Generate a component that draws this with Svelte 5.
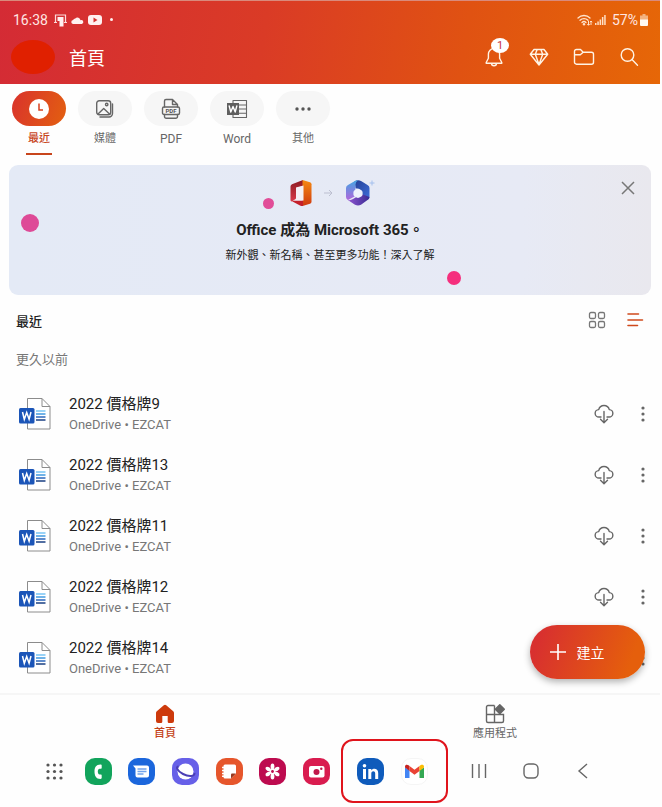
<script lang="ts">
	let activeTab = $state('recent');

	const tabs = [
		{ id: 'recent', label: '最近' },
		{ id: 'media', label: '媒體' },
		{ id: 'pdf', label: 'PDF' },
		{ id: 'word', label: 'Word' },
		{ id: 'more', label: '其他' }
	];

	const files = [
		{ name: '2022 價格牌9', place: 'OneDrive • EZCAT' },
		{ name: '2022 價格牌13', place: 'OneDrive • EZCAT' },
		{ name: '2022 價格牌11', place: 'OneDrive • EZCAT' },
		{ name: '2022 價格牌12', place: 'OneDrive • EZCAT' },
		{ name: '2022 價格牌14', place: 'OneDrive • EZCAT' }
	];
</script>

<div class="screen">
	<header>
		<div class="status">
			<span class="time">16:38</span>
			<svg width="13" height="14" viewBox="0 0 13 14" aria-hidden="true">
				<path d="M1.500 9V2h10v7" fill="none" stroke="#fbdcdc" stroke-width="1.2" />
				<path d="M0 9.500h3M10 9.500h3" stroke="#fbdcdc" stroke-width="1.2" />
				<path d="M3.500 4h6v9.500h-4V8h-2z" fill="#fff0f0" />
			</svg>
			<svg width="13" height="14" viewBox="0 0 13 14" aria-hidden="true">
				<path
					d="M2.500 11a2 2 0 0 1-.4-4 2.500 2.500 0 0 1 2.200-1.500 3 3 0 0 1 5.200 1.700A2 2 0 0 1 11 11z"
					fill="#fff0f0"
				/>
			</svg>
			<svg width="14" height="14" viewBox="0 0 14 14" aria-hidden="true">
				<rect y="2" width="14" height="10" rx="3" fill="#fff0f0" />
				<path d="M5.500 4.600 9.500 7l-4 2.400z" fill="#d5322f" />
			</svg>
			<span class="dot"></span>
			<span class="signal">
				<svg width="16" height="14" viewBox="0 0 16 14" aria-hidden="true">
					<g fill="none" stroke="#ffe3cc" stroke-width="1.300" stroke-linecap="round">
						<path d="M1 5a8.500 8.500 0 0 1 12 0M3 7.300a5.700 5.700 0 0 1 8 0M5 9.500a2.900 2.900 0 0 1 4 0" />
					</g>
					<circle cx="7" cy="11.300" r="1.200" fill="#ffe3cc" />
					<path d="M11.500 8v4M10.300 11l1.200 1.300 1.200-1.300M14 12V8M12.900 9.200 14 8l1.200 1.200" fill="none" stroke="#ffe3cc" />
				</svg>
				<svg width="11" height="14" viewBox="0 0 11 14" aria-hidden="true">
					<path d="M0 10h1.500v2H0zM2.300 8.500h1.500V12H2.300zM4.600 6.500h1.500V12H4.600zM6.900 4h1.500v8H6.900zM9.200 2h1.500v10H9.200z" fill="#ffdfc4" />
				</svg>
				<span class="percent">57%</span>
				<svg width="8" height="14" viewBox="0 0 8 14" aria-hidden="true">
					<path d="M2.500 1h3v1.500H8V7H0V2.500h2.500z" fill="#f3b27f" />
					<path d="M0 6.500h8V12a1 1 0 0 1-1 1H1a1 1 0 0 1-1-1z" fill="#fff8f0" />
				</svg>
			</span>
		</div>

		<div class="appbar">
			<span class="avatar"></span>
			<h1>首頁</h1>
			<div class="actions">
				<button aria-label="通知" class="bell">
					<svg width="22" height="22" viewBox="0 0 22 22">
						<path
							d="M11 2.500a5.600 5.600 0 0 0-5.600 5.600v4.200L3.200 16.500v.8h15.600v-.8l-2.200-4.200V8.100A5.600 5.600 0 0 0 11 2.500zM8.500 17.300a2.500 2.500 0 0 0 5 0"
						/>
					</svg>
					<span class="badge">1</span>
				</button>
				<button aria-label="進階">
					<svg width="22" height="22" viewBox="0 0 22 22">
						<path d="M6 3.500h10l3.700 4.700L11 19 2.300 8.200zM2.300 8.200h17.400M7.300 8.200 11 18.500l3.700-10.300M7.300 8.200 9.200 3.500M14.700 8.200l-1.900-4.700" />
					</svg>
				</button>
				<button aria-label="檔案">
					<svg width="22" height="22" viewBox="0 0 22 22">
						<path
							d="M1.500 5.500a2 2 0 0 1 2-2h4l2.700 2.700h8.300a2 2 0 0 1 2 2v8a2 2 0 0 1-2 2h-15a2 2 0 0 1-2-2zM1.500 8.700h5.800l2.900-2.500"
						/>
					</svg>
				</button>
				<button aria-label="搜尋">
					<svg width="22" height="22" viewBox="0 0 22 22">
						<circle cx="9.500" cy="9" r="6.300" />
						<path d="m14 13.500 5.500 5.700" />
					</svg>
				</button>
			</div>
		</div>
	</header>

	<nav class="tabs" aria-label="檔案類型">
		{#each tabs as tab (tab.id)}
			<button class:active={activeTab === tab.id} onclick={() => (activeTab = tab.id)}>
				<span class="pill">
					{#if tab.id === 'recent'}
						<svg width="22" height="22" viewBox="0 0 22 22">
							<circle cx="11" cy="11" r="10" fill="#fff" />
							<path d="M11 5.500V12h4" fill="none" stroke="#d6401f" stroke-width="1.500" />
						</svg>
					{:else if tab.id === 'media'}
						<svg width="20" height="20" viewBox="0 0 20 20" class="line">
							<rect x="1.700" y="1.700" width="14" height="14" rx="2.500" />
							<path d="m3 15 5.700-5.500L14.500 15M17.500 5v9.500a3.500 3.500 0 0 1-3.500 3.500H5" />
							<circle cx="11.700" cy="5.500" r="1.200" />
						</svg>
					{:else if tab.id === 'pdf'}
						<svg width="20" height="22" viewBox="0 0 20 22" class="line">
							<path d="M3.500 9V3a1.500 1.500 0 0 1 1.500-1.500h6.500l5 5V9M11.500 1.500v5h5" />
							<rect x="1.500" y="9" width="17" height="7.500" rx="1.500" />
							<path d="M3.500 16.500v2A1.700 1.700 0 0 0 5.200 20.200h9.600a1.700 1.700 0 0 0 1.700-1.700v-2" />
							<text x="10" y="15" text-anchor="middle">PDF</text>
						</svg>
					{:else if tab.id === 'word'}
						<svg width="22" height="22" viewBox="0 0 22 22" class="line">
							<path d="M7 5V2.500h13.500v17H7V16M12 7h8.500M12 11h8.500M12 15.300h8.500" stroke-width="1.100" />
							<rect x="1" y="5" width="12" height="12" class="block" />
							<path d="m3.200 8 1.600 6L7 8.500 9.200 14l1.600-6" class="letter" />
						</svg>
					{:else}
						<svg width="22" height="22" viewBox="0 0 22 22" fill="#555">
							<circle cx="5" cy="11" r="1.700" />
							<circle cx="11" cy="11" r="1.700" />
							<circle cx="17" cy="11" r="1.700" />
						</svg>
					{/if}
				</span>
				<span class="label" class:latin={/^\w+$/.test(tab.label)}>{tab.label}</span>
			</button>
		{/each}
	</nav>

	<section class="banner">
		<span class="bubble left"></span>
		<span class="bubble middle"></span>
		<span class="bubble right"></span>
		<button class="close" aria-label="關閉">
			<svg width="16" height="16" viewBox="0 0 16 16">
				<path d="m2 2 12 12M14 2 2 14" stroke="#777" stroke-width="1.500" />
			</svg>
		</button>
		<div class="logos">
			<svg width="22" height="28" viewBox="0 0 22 28" aria-hidden="true">
				<defs>
					<linearGradient id="office-left" x1="0" y1="0" x2="0" y2="1">
						<stop offset="0" stop-color="#8d1b23" />
						<stop offset="1" stop-color="#d93a4a" />
					</linearGradient>
					<linearGradient id="office-right" x1="0" y1="0" x2="0" y2="1">
						<stop offset="0" stop-color="#f58a12" />
						<stop offset="1" stop-color="#cf3a10" />
					</linearGradient>
				</defs>
				<path d="M.5 7.500q0-1.500 1.500-2.200L13 1v6L6 9v10.500q0 1-1 1.500l-3.500 1.500q-1-.5-1-1.500z" fill="url(#office-left)" />
				<path d="M12.500 1 20 3.300q1.500.5 1.500 2v17.400q0 1.500-1.500 2L12.500 27z" fill="url(#office-right)" />
				<path d="M2 21.500h11V27q-1.500.3-3-.5l-7.500-4z" fill="#c4202b" />
				<path d="M6 8.500 13.500 6.500v15H2.500L5 20.500q1-.5 1-1.500z" fill="#f4f0f5" />
			</svg>
			<svg width="9" height="8" viewBox="0 0 9 8" aria-hidden="true">
				<path d="M0 4h8M5 1l3 3-3 3" fill="none" stroke="#bcbfd0" />
			</svg>
			<svg width="30" height="28" viewBox="0 0 30 28" aria-hidden="true">
				<defs>
					<linearGradient id="m365-left" x1="0" y1="0" x2="0" y2="1">
						<stop offset="0" stop-color="#43a5e2" />
						<stop offset="1" stop-color="#b067dc" />
					</linearGradient>
					<linearGradient id="m365-right" x1="0" y1="0" x2="1" y2="1">
						<stop offset="0" stop-color="#243f94" />
						<stop offset="1" stop-color="#3e70dc" />
					</linearGradient>
					<linearGradient id="m365-base" x1="0" y1="0" x2="1" y2="0">
						<stop offset="0" stop-color="#9256d2" />
						<stop offset="1" stop-color="#382c93" />
					</linearGradient>
				</defs>
				<path d="M9.500 2.200q3.500-1.800 7 0L22.500 6q2 1 2 3v9q0 2-2 3l-6-4V12l-6-3z" fill="url(#m365-right)" />
				<path d="M9.500 2.200q2-1 3.500-1-2.500 1.500-2.500 4.500V17L3 21q-2-1-2-3V9q0-2 2-3z" fill="url(#m365-left)" />
				<path d="M2.500 20.800q3 1 5.500-.8l8.500-5 8 3q0 2-2 3L16 25.800q-3 1.500-6 0z" fill="url(#m365-base)" />
				<path d="M11.200 10q1.600-.8 3.200 0l2 1.200q1.200.8 1.200 2v2.200q0 1.200-1.200 2l-2 1.200q-1.400.8-2.800 0l-2-1.200q-1.200-.8-1.200-2v-2.200q0-1.200 1.200-2z" fill="#edf1fc" />
				<path d="M27 1.500v5M24.500 4h5" stroke="#a4c0ee" />
			</svg>
		</div>
		<h2>Office 成為 Microsoft 365。</h2>
		<p>新外觀、新名稱、甚至更多功能！深入了解</p>
	</section>

	<main>
		<div class="list-head">
			<h3>最近</h3>
			<button aria-label="格狀檢視">
				<svg width="18" height="18" viewBox="0 0 18 18" fill="none" stroke="#777" stroke-width="1.300">
					<rect x="1.500" y="1.500" width="6" height="6" rx="1.500" />
					<rect x="10.500" y="1.500" width="6" height="6" rx="1.500" />
					<rect x="1.500" y="10.500" width="6" height="6" rx="1.500" />
					<rect x="10.500" y="10.500" width="6" height="6" rx="1.500" />
				</svg>
			</button>
			<button aria-label="清單檢視">
				<svg width="18" height="18" viewBox="0 0 18 18" stroke="#cf4a1c" stroke-width="1.600" stroke-linecap="round">
					<path d="M2 3h10.500M2 9h14.500M2 14.500h9.500" />
				</svg>
			</button>
		</div>
		<h4>更久以前</h4>

		<ul>
			{#each files as file (file.name)}
				<li>
					<svg width="34" height="34" viewBox="0 0 34 34" aria-hidden="true">
						<path d="M9.500 1.500H24l8 8V32H9.500z" fill="#fff" stroke="#8c8c8c" />
						<path d="M24 1.500v8h8" fill="none" stroke="#8c8c8c" />
						<path d="M18 14h9.500" stroke="#77c5f5" stroke-width="1.500" />
						<path d="M18 17h9.500" stroke="#3f9ae0" stroke-width="1.500" />
						<path d="M18 20h9.500" stroke="#2a66bd" stroke-width="1.500" />
						<path d="M18 23h9.500" stroke="#193f83" stroke-width="1.500" />
						<rect x="1" y="11" width="15.500" height="15.500" rx="1.500" fill="#1b55b8" />
						<path d="m4.500 15 1.800 7.300L8.700 15.500l2.400 6.800L13 15" fill="none" stroke="#fff" stroke-width="1.500" />
					</svg>
					<a href="#file">
						<span class="name">{file.name}</span>
						<span class="place">{file.place}</span>
					</a>
					<button aria-label="下載">
						<svg width="20" height="20" viewBox="0 0 20 20" class="line">
							<path d="M7 13H5a3.700 3.700 0 0 1-.3-7.400 5.500 5.500 0 0 1 10.600 0A3.700 3.700 0 0 1 15 13h-2M10 7.500v11M6.500 15.200l3.500 3.500 3.500-3.500" />
						</svg>
					</button>
					<button aria-label="更多選項">
						<svg width="6" height="16" viewBox="0 0 6 16" fill="#666">
							<circle cx="3" cy="2" r="1.600" />
							<circle cx="3" cy="8" r="1.600" />
							<circle cx="3" cy="14" r="1.600" />
						</svg>
					</button>
				</li>
			{/each}
		</ul>

		<button class="create">
			<svg width="18" height="18" viewBox="0 0 18 18" aria-hidden="true">
				<path d="M9 1v16M1 9h16" stroke="#fff" stroke-width="1.600" />
			</svg>
			建立
		</button>
	</main>

	<nav class="bottom" aria-label="主要">
		<a href="#home" class="active">
			<svg width="20" height="20" viewBox="0 0 20 20" aria-hidden="true">
				<path
					d="M8.800 1.200a2 2 0 0 1 2.400 0l7 6q.8.700.8 1.700V17a2 2 0 0 1-2 2h-3a1.300 1.300 0 0 1-1.300-1.300V12H7.300v5.700A1.300 1.300 0 0 1 6 19H3a2 2 0 0 1-2-2V8.900q0-1 .8-1.700z"
					fill="#cd3a0c"
				/>
			</svg>
			首頁
		</a>
		<a href="#apps">
			<svg width="20" height="20" viewBox="0 0 20 20" aria-hidden="true">
				<path
					d="M9.500 1.500H3A1.500 1.500 0 0 0 1.500 3v14A1.500 1.500 0 0 0 3 18.500h14a1.500 1.500 0 0 0 1.500-1.500v-6.500h-17M9.500 1.500v17"
					fill="none"
					stroke="#666"
					stroke-width="1.400"
				/>
				<path d="m14.800.8 4.500 4.500-4.500 4.500-4.500-4.500z" fill="#666" stroke="#666" stroke-linejoin="round" stroke-width="1.500" />
			</svg>
			應用程式
		</a>
	</nav>

	<footer>
		<div class="apps">
			<button aria-label="所有應用程式">
				<svg width="27" height="27" viewBox="0 0 27 27" fill="#555">
					{#each [7, 13.5, 20] as cy}
						{#each [7, 13.5, 20] as cx}
							<circle {cx} {cy} r="1.600" />
						{/each}
					{/each}
				</svg>
			</button>
			<button aria-label="電話">
				<svg width="27" height="27" viewBox="0 0 27 27">
					<rect width="27" height="27" rx="10" fill="#12a45c" />
					<path
						d="M15.500 6.500c-4.500 0-6 3-6 7s1.500 7.500 6 7.500c.8 0 1.200-.5 1.200-1.200V17.500c0-.8-.4-1-1-1h-1c-1.400 0-1.900-1.500-1.900-2.900s.5-2.800 1.900-2.800h1c.6 0 1-.3 1-1V7.500c0-.6-.4-1-1.200-1z"
						fill="#fff"
					/>
				</svg>
			</button>
			<button aria-label="訊息">
				<svg width="27" height="27" viewBox="0 0 27 27">
					<rect width="27" height="27" rx="10" fill="#1b66dc" />
					<path d="M5 7.500h14a2 2 0 0 1 2 2V17.500a2 2 0 0 1-2 2H9.500a2 2 0 0 1-2-2v-7z" fill="#fff" />
					<path d="M9.500 11h9M9.500 13.500h9M9.500 16h6" stroke="#72a3ec" stroke-width="1.300" />
				</svg>
			</button>
			<button aria-label="瀏覽器">
				<svg width="27" height="27" viewBox="0 0 27 27">
					<rect width="27" height="27" rx="10" fill="#6760e8" />
					<circle cx="13.500" cy="13.500" r="8" fill="#fff" />
					<path d="M6.500 8.500C3.500 8.500 5 13 11 16s12 2.500 11.500-1" fill="none" stroke="#4b3fb5" stroke-width="2" />
				</svg>
			</button>
			<button aria-label="筆記">
				<svg width="27" height="27" viewBox="0 0 27 27">
					<rect width="27" height="27" rx="10" fill="#e6562c" />
					<path d="M9 6.500h9.500A1.500 1.500 0 0 1 20 8v7.500L15 20.500H9A1.500 1.500 0 0 1 7.500 19V8A1.500 1.500 0 0 1 9 6.500z" fill="#fff" />
					<path d="M6 9.500h3M6 12.500h3M6 15.500h3M6 18.300h3" stroke="#fff" stroke-width="1.500" />
					<path d="M20 15.500h-4a1 1 0 0 0-1 1v4z" fill="#96381f" />
				</svg>
			</button>
			<button aria-label="相簿">
				<svg width="27" height="27" viewBox="0 0 27 27">
					<rect width="27" height="27" rx="10" fill="#bd0b4f" />
					{#each [0, 60, 120, 180, 240, 300] as angle}
						<ellipse cx="13.500" cy="8.500" rx="1.900" ry="2.900" fill="#fff" transform="rotate({angle} 13.500 13.500)" />
					{/each}
					<circle cx="13.500" cy="13.500" r="3" fill="#fff" />
					<circle cx="13.500" cy="13.500" r="1.400" fill="#bd0b4f" />
				</svg>
			</button>
			<button aria-label="相機">
				<svg width="27" height="27" viewBox="0 0 27 27">
					<rect width="27" height="27" rx="10" fill="#d91c4f" />
					<rect x="6" y="8" width="15.500" height="11.500" rx="2" fill="#fff" />
					<circle cx="13.500" cy="14" r="3" fill="#c0184a" />
					<circle cx="18.300" cy="10.700" r="1.200" fill="#c0184a" />
				</svg>
			</button>
		</div>
		<div class="pinned">
			<button aria-label="LinkedIn">
				<svg width="27" height="27" viewBox="0 0 27 27">
					<rect width="27" height="27" rx="10" fill="#0f5bbb" />
					<circle cx="7.500" cy="7.700" r="1.800" fill="#fff" />
					<path d="M6 11h3v10H6zM11.300 11h2.900v1.400c2-2.600 7-2 7 2.600v6h-3v-5.500c0-3-3.900-2.700-3.900 0V21h-3z" fill="#fff" />
				</svg>
			</button>
			<button aria-label="Gmail">
				<svg width="27" height="27" viewBox="0 0 27 27">
					<rect x=".5" y=".5" width="26" height="26" rx="9.500" fill="#fff" stroke="#f5f5f5" />
					<path d="M4 9.500v10.500h4.500V12z" fill="#4285f4" />
					<path d="M18.500 12v8H23V9.500z" fill="#34a853" />
					<path d="M4 9.500V8.700c0-2 2-2.500 3.500-1.400l1 .8v4.700L4 9.500z" fill="#c5221f" />
					<path d="m8.500 8 5 3.800 5-3.800v4.900l-5 3.800-5-3.800z" fill="#ea4335" />
					<path d="m18.500 8 1-.8C21 6.200 23 6.700 23 8.700v.9l-4.500 3.300z" fill="#fbbc04" />
				</svg>
			</button>
		</div>
		<div class="system">
			<button aria-label="最近的應用程式">
				<svg width="18" height="18" viewBox="0 0 18 18"><path d="M2.500 2v14M9 2v14M15.500 2v14" /></svg>
			</button>
			<button aria-label="主畫面">
				<svg width="18" height="18" viewBox="0 0 18 18"><rect x="2" y="2" width="14" height="14" rx="4.500" /></svg>
			</button>
			<button aria-label="返回">
				<svg width="18" height="18" viewBox="0 0 18 18"><path d="M13 2 5 9l8 7" /></svg>
			</button>
		</div>
	</footer>
</div>

<style>
	:global(body) {
		margin: 0;
		background: #fefefe;
	}

	.screen {
		padding: 0 2px 9px 0;
		font-family: Roboto, 'Noto Sans CJK TC', sans-serif;
		color: #222;
	}

	h1,
	h2,
	h3,
	h4,
	p,
	ul {
		margin: 0;
		padding: 0;
	}

	button {
		display: flex;
		padding: 0;
		border: 0;
		background: none;
		font: inherit;
		color: inherit;
	}

	svg {
		display: block;
		flex: none;
	}

	.line {
		fill: none;
		stroke: #666;
		stroke-width: 1.4;
		stroke-linecap: round;
		stroke-linejoin: round;
	}

	header {
		box-sizing: border-box;
		height: 84px;
		border-top: 1px solid #d98a7c;
		color: #fff;
		background: linear-gradient(100deg, #d42b35, #da3b26 40%, #e05212 70%, #e66707);
	}

	.status {
		display: flex;
		align-items: center;
		gap: 4px;
		height: 37px;
		padding: 0 12px 0 13px;
		font-size: 14px;
		color: #ffe6e2;
	}

	.time {
		margin-right: 2px;
	}

	.dot {
		width: 3px;
		height: 3px;
		margin-left: 4px;
		border-radius: 50%;
		background: #fff0f0;
	}

	.signal {
		display: flex;
		align-items: center;
		gap: 2px;
		margin-left: auto;
	}

	.percent {
		margin-left: 4px;
	}

	.appbar {
		display: flex;
		align-items: center;
		height: 38px;
		padding: 0 20px 0 11px;
	}

	.avatar {
		width: 44px;
		height: 34px;
		margin-right: 14px;
		border-radius: 50%;
		background: #e02000;
	}

	h1 {
		font-size: 18px;
		font-weight: 400;
	}

	.actions {
		display: flex;
		gap: 23px;
		margin-left: auto;
	}

	.actions svg {
		fill: none;
		stroke: #fff3e4;
		stroke-width: 1.4;
		stroke-linejoin: round;
		stroke-linecap: round;
	}

	.bell {
		position: relative;
	}

	.badge {
		position: absolute;
		top: -8px;
		left: 8px;
		width: 18px;
		height: 15px;
		border-radius: 50%;
		background: #fff;
		font-size: 11px;
		line-height: 15px;
		text-align: center;
		color: #c8323c;
	}

	.tabs {
		display: flex;
		gap: 12px;
		padding: 7px 12px 10px;
	}

	.tabs button {
		flex-direction: column;
		align-items: center;
		color: #666;
	}

	.tabs button.active {
		color: #c8451c;
	}

	.pill {
		display: flex;
		align-items: center;
		justify-content: center;
		width: 54px;
		height: 35px;
		border-radius: 18px;
		background: #f6f6f6;
	}

	.active .pill {
		background: linear-gradient(110deg, #d9322c, #e36010);
	}

	.pill text {
		font-size: 6px;
		font-weight: 700;
		stroke: none;
		fill: #555;
	}

	.pill .block {
		fill: #5f5f5f;
		stroke: none;
	}

	.pill .letter {
		stroke: #fff;
	}

	.label {
		box-sizing: border-box;
		height: 29px;
		padding: 0 2px;
		border-bottom: 2px solid transparent;
		font-size: 11px;
		line-height: 26px;
	}

	.label.latin {
		font-size: 12px;
	}

	.active .label {
		border-color: #c8451c;
		font-weight: 500;
	}

	.banner {
		position: relative;
		box-sizing: border-box;
		height: 130px;
		margin: 0 9px;
		padding-top: 14px;
		border-radius: 9px;
		text-align: center;
		background: linear-gradient(90deg, #e4eaf6, #e7eaf5 80%, #e9e8ee);
	}

	.logos {
		display: flex;
		align-items: center;
		justify-content: center;
		gap: 12px;
		padding-left: 4px;
	}

	.banner h2 {
		margin-top: 11px;
		font-size: 15px;
		font-weight: 700;
		line-height: 24px;
	}

	.banner p {
		margin-top: 4px;
		font-size: 11px;
		line-height: 20px;
	}

	.close {
		position: absolute;
		top: 15px;
		right: 15px;
	}

	.bubble {
		position: absolute;
		border-radius: 50%;
	}

	.bubble.left {
		top: 49px;
		left: 12px;
		width: 18px;
		height: 18px;
		background: #de4a97;
	}

	.bubble.middle {
		top: 33px;
		left: calc(50% - 67px);
		width: 11px;
		height: 11px;
		background: #e14d98;
	}

	.bubble.right {
		top: 106px;
		left: calc(50% + 117px);
		width: 14px;
		height: 14px;
		background: #f52f7d;
	}

	main {
		position: relative;
	}

	.list-head {
		display: flex;
		align-items: center;
		gap: 20px;
		height: 50px;
		padding: 0 16px;
	}

	h3 {
		margin-right: auto;
		font-size: 13px;
		font-weight: 500;
	}

	h4 {
		padding-left: 16px;
		font-size: 13px;
		font-weight: 400;
		line-height: 30px;
		color: #777;
	}

	ul {
		padding: 8px 14px 5px 18px;
		list-style: none;
	}

	li {
		display: flex;
		align-items: center;
		height: 61px;
	}

	li a {
		display: flex;
		flex: 1;
		flex-direction: column;
		margin-left: 17px;
		color: inherit;
		text-decoration: none;
	}

	li button {
		margin-left: 27px;
	}

	li button:last-child {
		margin-left: 26px;
	}

	.name {
		font-size: 15px;
		line-height: 22px;
	}

	.place {
		font-size: 13px;
		line-height: 20px;
		color: #777;
	}

	.create {
		position: absolute;
		right: 15px;
		bottom: 14px;
		align-items: center;
		justify-content: center;
		gap: 10px;
		width: 115px;
		height: 54px;
		padding-right: 22px;
		border-radius: 27px;
		font-size: 14px;
		color: #fff;
		background: linear-gradient(110deg, #d8302f 10%, #e55f0c 85%);
		box-shadow: 0 3px 7px rgb(0 0 0 / 30%);
	}

	.bottom {
		display: flex;
		border-top: 2px solid #f6f6f6;
	}

	.bottom a {
		display: flex;
		flex: 1;
		flex-direction: column;
		align-items: center;
		padding-top: 9px;
		font-size: 11px;
		line-height: 20px;
		color: #666;
		text-decoration: none;
	}

	.bottom a.active {
		font-weight: 500;
		color: #c4431a;
	}

	footer {
		display: flex;
		align-items: center;
		height: 54px;
		padding: 0 68px 0 41px;
	}

	.apps,
	.pinned,
	.system {
		display: flex;
		align-items: center;
		justify-content: space-between;
	}

	.apps {
		flex: 289;
	}

	/* taller than the bar on purpose, the frame reaches past it */
	.pinned {
		box-sizing: border-box;
		flex: none;
		gap: 17px;
		height: 64px;
		margin: 0 22px 0 11px;
		padding: 0 18px 0 14px;
		border: 2px solid #e0141c;
		border-radius: 12px;
	}

	.system {
		flex: 122;
	}

	.system svg {
		fill: none;
		stroke: #666;
		stroke-width: 1.4;
	}
</style>
